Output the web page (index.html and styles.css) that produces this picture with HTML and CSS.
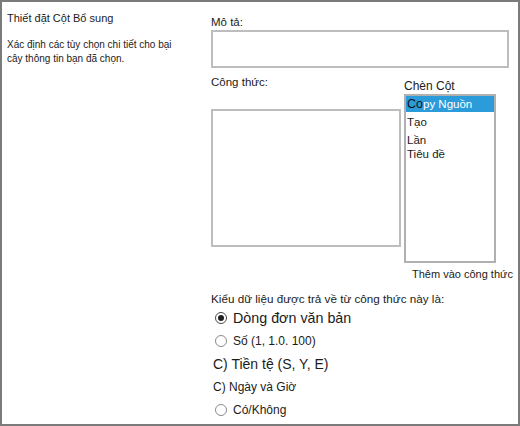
FILE: index.html
```html
<!DOCTYPE html>
<html lang="vi">
<head>
<meta charset="utf-8">
<title>Thiết đặt Cột Bổ sung</title>
<link rel="stylesheet" href="styles.css">
</head>
<body>
<div class="panel">
  <section class="left">
    <div class="title">Thiết đặt Cột Bổ sung</div>
    <p class="desc">Xác định các tùy chọn chi tiết cho bại<br>cây thông tin bạn đã chọn.</p>
  </section>
  <section class="right">
    <div class="label label-desc">Mô tả:</div>
    <div class="textbox desc-box"></div>
    <div class="formula-row">
      <div class="formula-col">
        <div class="label">Công thức:</div>
        <div class="textbox formula-box"></div>
      </div>
      <div class="insert-col">
        <div class="insert-label">Chèn Cột</div>
        <ul class="listbox">
          <li class="selected"><span class="dark">Co</span>py Nguồn</li>
          <li class="spaced">Tạo</li>
          <li class="spaced">Lần</li>
          <li class="tight">Tiêu đề</li>
        </ul>
        <div class="add-link">Thêm vào công thức</div>
      </div>
    </div>
    <div class="type-label">Kiểu dữ liệu được trả về từ công thức này là:</div>
    <div class="options">
      <div class="opt big"><span class="radio checked"></span>Dòng đơn văn bản</div>
      <div class="opt"><span class="radio"></span>Số (1, 1.0. 100)</div>
      <div class="opt plain medium">C) Tiền tệ (S, Y, E)</div>
      <div class="opt plain">C) Ngày và Giờ</div>
      <div class="opt"><span class="radio"></span>Có/Không</div>
    </div>
  </section>
</div>
</body>
</html>
```

FILE: styles.css
```css
html, body {
  margin: 0;
  padding: 0;
  background: #ffffff;
}

body {
  font-family: "Liberation Sans", Arial, sans-serif;
  color: #1b1b1b;
}

.panel {
  box-sizing: border-box;
  width: 520px;
  height: 426px;
  border: 2px solid #7b7b7b;
  display: grid;
  grid-template-columns: 209px 1fr;
  background: #fff;
}

.left {
  padding: 9px 0 0 5px;
}

.title {
  font-size: 11px;
  line-height: 14px;
}

.desc {
  margin: 13px 0 0;
  font-size: 10px;
  line-height: 14px;
}

.right {
  padding-top: 13px;
  display: flex;
  flex-direction: column;
}

.label {
  font-size: 11.5px;
  line-height: 14px;
}

.textbox {
  box-sizing: border-box;
  border: 2px solid #bdbdbd;
  background: #fff;
}

.desc-box {
  margin-top: 1px;
  width: 298px;
  height: 38px;
}

.formula-row {
  display: flex;
  align-items: flex-start;
  gap: 3px;
}

.formula-col {
  margin-top: 7px;
  width: 190px;
}

.formula-box {
  margin-top: 20px;
  width: 190px;
  height: 138px;
}

.insert-col {
  margin-top: 11px;
  width: 110px;
}

.insert-label {
  font-size: 12px;
  line-height: 14px;
}

.listbox {
  box-sizing: border-box;
  list-style: none;
  margin: 1px 0 0;
  padding: 0;
  width: 92px;
  height: 169px;
  border: 2px solid #b0b0b0;
  font-size: 11.5px;
}

.listbox li {
  line-height: 16px;
  padding-left: 1px;
  white-space: nowrap;
}

.listbox .selected {
  background: #2c9bd9;
  color: #ffffff;
}

.listbox .selected .dark {
  color: #111;
  font-size: 12.5px;
}

.listbox .spaced {
  padding-top: 2px;
}

.listbox .tight {
  line-height: 12px;
}

.add-link {
  margin-top: 4px;
  padding-left: 8px;
  font-size: 11px;
  line-height: 14px;
  white-space: nowrap;
}

.type-label {
  margin-top: 11px;
  font-size: 11.7px;
  line-height: 14px;
}

.options {
  display: flex;
  flex-direction: column;
}

.opt {
  height: 23px;
  display: flex;
  align-items: center;
  gap: 6px;
  padding-left: 4px;
  font-size: 12px;
  white-space: nowrap;
}

.opt.big {
  font-size: 14.3px;
}

.opt.medium {
  font-size: 14px;
}

.opt.plain {
  padding-left: 2px;
}

.radio {
  box-sizing: border-box;
  width: 12px;
  height: 12px;
  border: 1px solid #8a8a8a;
  border-radius: 50%;
  background: #fff;
  display: inline-flex;
  align-items: center;
  justify-content: center;
  flex: none;
}

.radio.checked {
  border-color: #4a4a4a;
}

.radio.checked::after {
  content: "";
  width: 6px;
  height: 6px;
  border-radius: 50%;
  background: #1f1f1f;
}
```
